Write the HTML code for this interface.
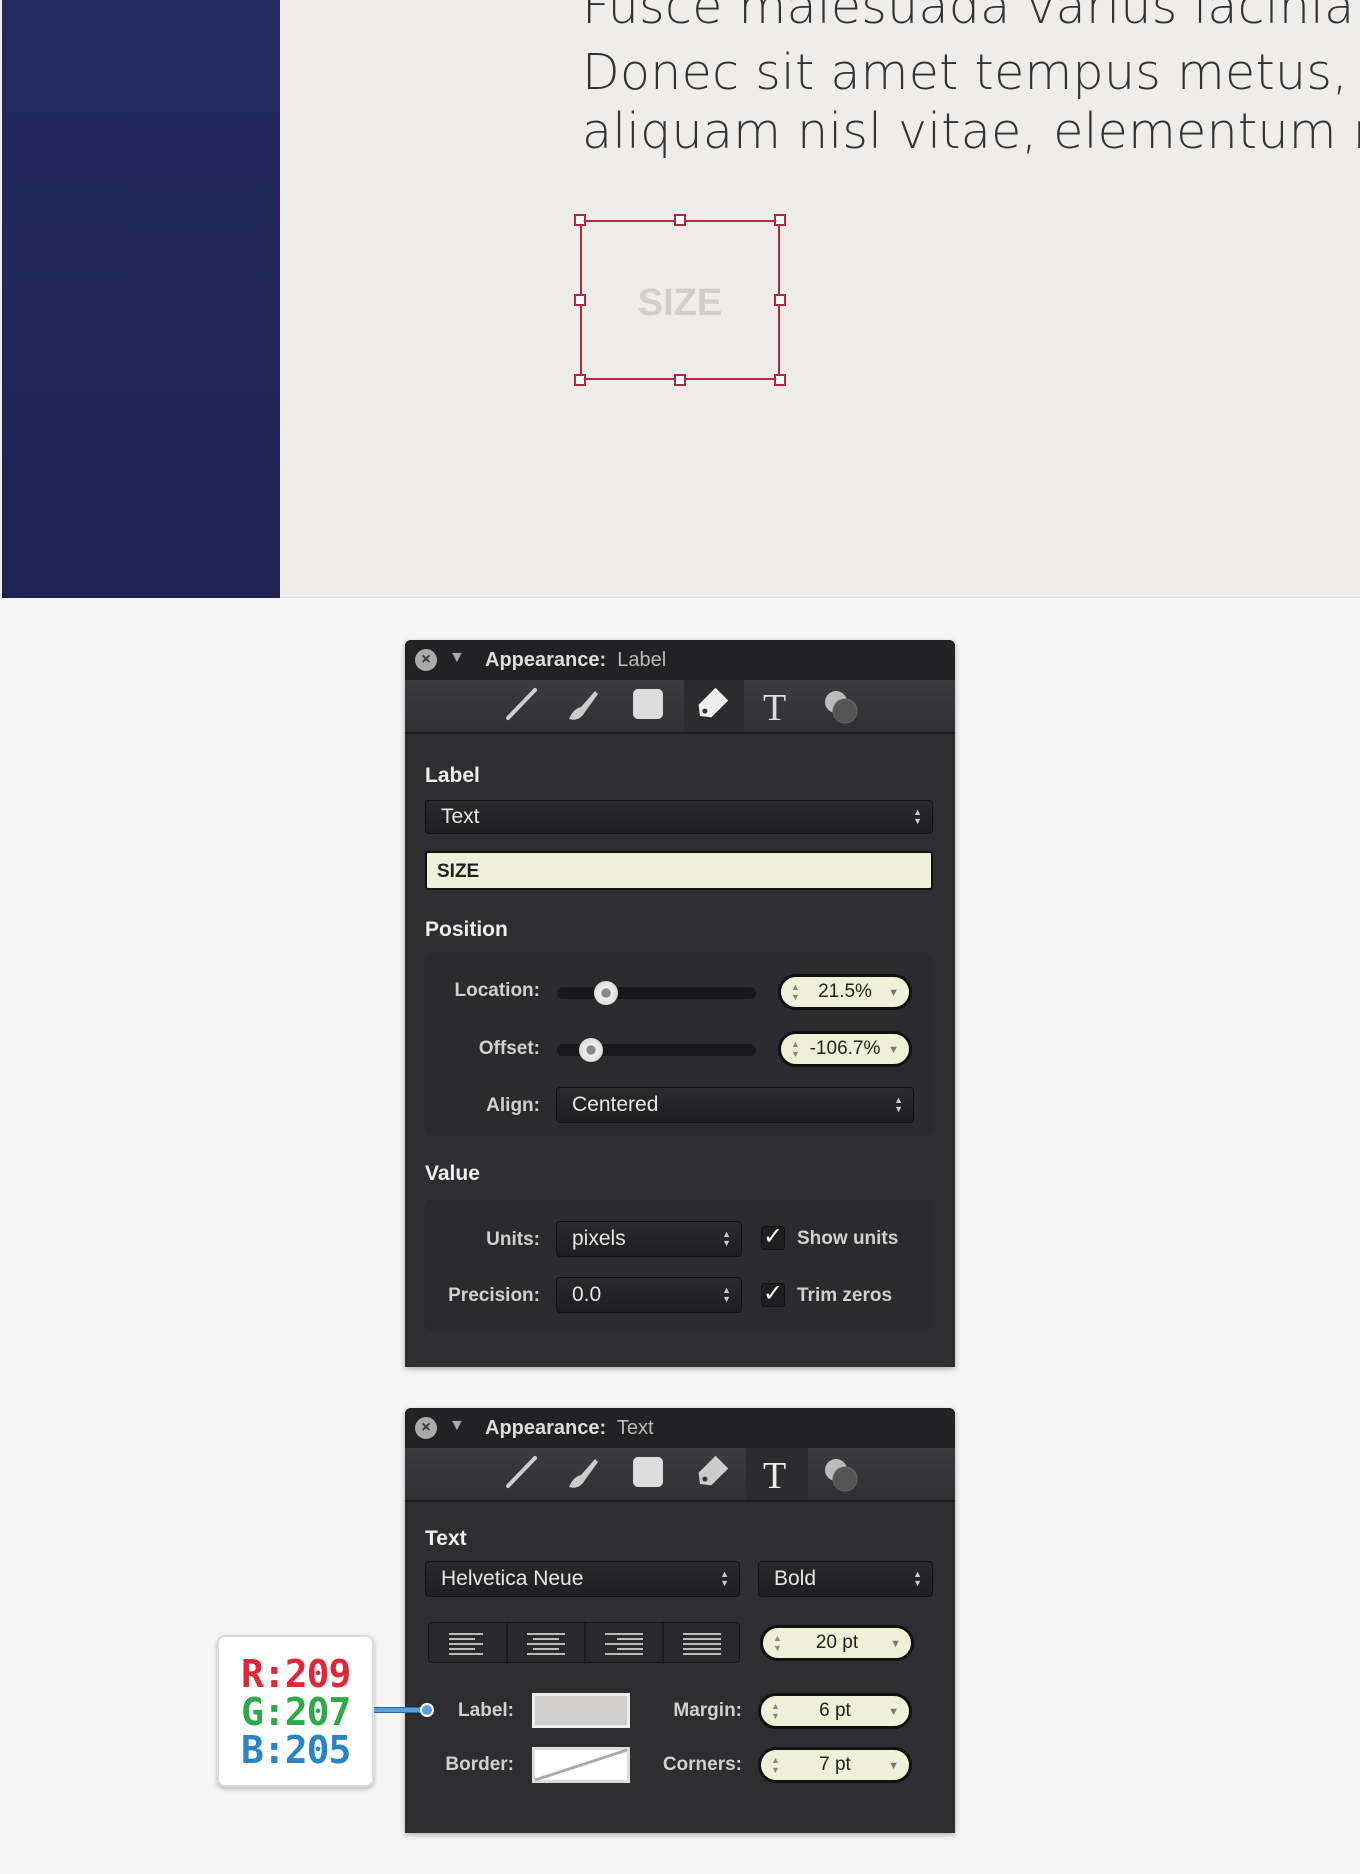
<!DOCTYPE html>
<html><head><meta charset="utf-8"><style>
*{box-sizing:border-box;margin:0;padding:0}
body{width:1360px;height:1874px;background:#f5f5f5;position:relative;overflow:hidden;font-family:"Liberation Sans",Arial,sans-serif}
.a{position:absolute}
.top{left:0;top:0;width:1360px;height:598px;background:#eeedeb;border-bottom:1px solid #ddd}
.side{left:2px;top:0;width:278px;height:598px;background:linear-gradient(#232a5e,#1e2353)}
.big{left:582px;font-size:49px;color:#333;letter-spacing:0.3px;white-space:nowrap;font-family:"DejaVu Sans","Liberation Sans",sans-serif;font-weight:200}
.sel{left:580px;top:220px;width:200px;height:160px;border:2px solid #b0283a}
.h{width:12px;height:12px;border:2px solid #b0283a;background:#fff}
.panel{left:405px;width:550px;background:#2e2e31;box-shadow:0 2px 6px rgba(0,0,0,.3)}
.hdr{left:0;top:0;width:550px;height:40px;background:#222224;border-radius:6px 6px 0 0;color:#ddd;font-size:20px}
.tb{left:0;top:40px;width:550px;height:54px;background:linear-gradient(#3c3c40,#303033);border-bottom:2px solid #1c1c1e}
.lbl{color:#d0d0d0;font-weight:bold;font-size:19px;text-align:right}
.hd{color:#eee;font-weight:bold;font-size:21px;left:20px}
.selb{background:linear-gradient(#2a2a2d,#1e1e20);border:1px solid #111;border-radius:4px;color:#e6e6e6;font-size:21px;padding-left:15px;display:flex;align-items:center}
.arr{position:absolute;right:10px;top:50%;transform:translateY(-50%);font-size:9px;line-height:9px;color:#ccc}
.pill{background:#eef0d8;border:3px solid #111;border-radius:18px;height:36px;color:#222;font-size:19px;display:flex;align-items:center;justify-content:center}
.pill .u{position:absolute;left:10px;top:5px;font-size:9px;line-height:10px;color:#888}
.pill .d{position:absolute;right:10px;top:10px;font-size:11px;color:#777}
.slider{height:12px;background:#18181a;border-radius:6px}
.knob{width:24px;height:24px;border-radius:50%;background:radial-gradient(#888 25%,#f0f0f0 30%,#ccc);top:-6px}
.grp{background:#2b2b2e;border:1px solid #29292b;border-radius:6px}
.chk{width:24px;height:24px;background:#1e1e20;border:1px solid #111;border-radius:3px;color:#fff;font-size:24px;line-height:20px;text-align:center}
</style></head><body>
<div class="a top"></div>
<div class="a side"></div>
<div class="a big" style="top:-22px">Fusce malesuada varius lacinia</div>
<div class="a big" style="top:44px">Donec sit amet tempus metus, a</div>
<div class="a big" style="top:103px">aliquam nisl vitae, elementum m</div>
<div class="a sel"></div>
<div class="a" style="left:580px;top:282px;width:200px;text-align:center;font-weight:bold;font-size:38px;color:#d1cfcd">SIZE</div>
<div class="a h" style="left:574px;top:214px"></div><div class="a h" style="left:674px;top:214px"></div><div class="a h" style="left:774px;top:214px"></div>
<div class="a h" style="left:574px;top:294px"></div><div class="a h" style="left:774px;top:294px"></div>
<div class="a h" style="left:574px;top:374px"></div><div class="a h" style="left:674px;top:374px"></div><div class="a h" style="left:774px;top:374px"></div>

<!-- panel 1 -->
<div class="a panel" style="top:640px;height:727px;border-radius:6px 6px 0 0">
 <div class="a hdr"><div class="a" style="left:10px;top:9px;width:22px;height:22px;border-radius:50%;background:#aaa;color:#333;font-size:16px;text-align:center;line-height:22px;font-weight:bold">×</div>
 <div class="a" style="left:44px;top:9px;color:#aaa;font-size:16px">▼</div>
 <div class="a" style="left:80px;top:9px"><b>Appearance:</b>&nbsp; <span style="color:#bbb">Label</span></div></div>
 <div class="a tb">
  <svg class="a" style="left:0;top:0" width="550" height="54">
   <rect x="279" y="0" width="60" height="52" fill="#2c2c2f"/>
   <line x1="103" y1="38" x2="130" y2="10" stroke="#ccc" stroke-width="4" stroke-linecap="round"/>
   <path d="M164 39 q4-10 12-12 l14-16 l3 3 l-13 18 q-6 10-16 7z" fill="#ccc"/>
   <rect x="228" y="9" width="30" height="30" rx="5" fill="#ddd"/>
   <g transform="rotate(-45 307 24)"><path d="M290 24 l7-9 h24 v18 h-24z" fill="#eee"/><circle cx="297" cy="24" r="2.5" fill="#333"/></g>
   <text x="358" y="40" font-family="Liberation Serif" font-size="38" fill="#ddd">T</text>
   <circle cx="431" cy="22" r="11" fill="#bbb"/><circle cx="440" cy="31" r="12" fill="#555" stroke="#666"/>
  </svg>
 </div>
 <div class="a hd" style="top:124px">Label</div>
 <div class="a selb" style="left:20px;top:160px;width:508px;height:34px">Text<div class="arr">▲<br>▼</div></div>
 <div class="a" style="left:20px;top:211px;width:508px;height:39px;background:#eef0d8;border:2px solid #111;border-radius:3px;font-weight:bold;font-size:19px;color:#222;padding:8px 10px">SIZE</div>
 <div class="a hd" style="top:278px">Position</div>
 <div class="a grp" style="left:20px;top:315px;width:508px;height:180px"></div>
 <div class="a lbl" style="left:20px;top:340px;width:115px">Location:</div>
 <div class="a slider" style="left:152px;top:347px;width:199px"><div class="a knob" style="left:37px"></div></div>
 <div class="a pill" style="left:373px;top:334px;width:134px"><span class="u">▲<br>▼</span>21.5%<span class="d">▼</span></div>
 <div class="a lbl" style="left:20px;top:398px;width:115px">Offset:</div>
 <div class="a slider" style="left:152px;top:404px;width:199px"><div class="a knob" style="left:22px"></div></div>
 <div class="a pill" style="left:373px;top:391px;width:134px"><span class="u">▲<br>▼</span>-106.7%<span class="d">▼</span></div>
 <div class="a lbl" style="left:20px;top:455px;width:115px">Align:</div>
 <div class="a selb" style="left:151px;top:447px;width:358px;height:36px">Centered<div class="arr">▲<br>▼</div></div>
 <div class="a hd" style="top:522px">Value</div>
 <div class="a grp" style="left:20px;top:560px;width:508px;height:130px"></div>
 <div class="a lbl" style="left:20px;top:589px;width:115px">Units:</div>
 <div class="a selb" style="left:151px;top:581px;width:186px;height:36px">pixels<div class="arr">▲<br>▼</div></div>
 <div class="a chk" style="left:356px;top:586px">✓</div>
 <div class="a lbl" style="left:392px;top:588px;text-align:left">Show units</div>
 <div class="a lbl" style="left:20px;top:645px;width:115px">Precision:</div>
 <div class="a selb" style="left:151px;top:637px;width:186px;height:36px">0.0<div class="arr">▲<br>▼</div></div>
 <div class="a chk" style="left:356px;top:643px">✓</div>
 <div class="a lbl" style="left:392px;top:645px;text-align:left">Trim zeros</div>
</div>

<!-- panel 2 -->
<div class="a panel" style="top:1408px;height:425px;border-radius:6px 6px 0 0">
 <div class="a hdr"><div class="a" style="left:10px;top:9px;width:22px;height:22px;border-radius:50%;background:#aaa;color:#333;font-size:16px;text-align:center;line-height:22px;font-weight:bold">×</div>
 <div class="a" style="left:44px;top:9px;color:#aaa;font-size:16px">▼</div>
 <div class="a" style="left:80px;top:9px"><b>Appearance:</b>&nbsp; <span style="color:#bbb">Text</span></div></div>
 <div class="a tb">
  <svg class="a" style="left:0;top:0" width="550" height="54">
   <rect x="341" y="0" width="62" height="52" fill="#2c2c2f"/>
   <line x1="103" y1="38" x2="130" y2="10" stroke="#ccc" stroke-width="4" stroke-linecap="round"/>
   <path d="M164 39 q4-10 12-12 l14-16 l3 3 l-13 18 q-6 10-16 7z" fill="#ccc"/>
   <rect x="228" y="9" width="30" height="30" rx="5" fill="#ddd"/>
   <g transform="rotate(-45 307 24)"><path d="M290 24 l7-9 h24 v18 h-24z" fill="#ccc"/><circle cx="297" cy="24" r="2.5" fill="#333"/></g>
   <text x="358" y="40" font-family="Liberation Serif" font-size="38" fill="#eee">T</text>
   <circle cx="431" cy="22" r="11" fill="#bbb"/><circle cx="440" cy="31" r="12" fill="#555" stroke="#666"/>
  </svg>
 </div>
 <div class="a hd" style="top:119px">Text</div>
 <div class="a selb" style="left:20px;top:153px;width:315px;height:36px">Helvetica Neue<div class="arr">▲<br>▼</div></div>
 <div class="a selb" style="left:353px;top:153px;width:175px;height:36px">Bold<div class="arr">▲<br>▼</div></div>
 <div class="a" style="left:23px;top:214px;width:312px;height:41px;background:#29292c;border:1px solid #151517;border-radius:4px;display:flex">
  <svg width="312" height="41"><g stroke="#bbb" stroke-width="2">
   <line x1="78" y1="0" x2="78" y2="41" stroke="#1a1a1c"/><line x1="156" y1="0" x2="156" y2="41" stroke="#1a1a1c"/><line x1="234" y1="0" x2="234" y2="41" stroke="#1a1a1c"/>
   <path d="M20 11h34M20 16h26M20 21h34M20 26h26M20 31h34"/>
   <path d="M98 11h38M104 16h26M98 21h38M104 26h26M98 31h38"/>
   <path d="M176 11h38M188 16h26M176 21h38M188 26h26M176 31h38"/>
   <path d="M254 11h38M254 16h38M254 21h38M254 26h38M254 31h38"/>
  </g></svg>
 </div>
 <div class="a pill" style="left:355px;top:217px;width:154px"><span class="u">▲<br>▼</span>20 pt<span class="d">▼</span></div>
 <div class="a lbl" style="left:20px;top:292px;width:89px">Label:</div>
 <div class="a" style="left:127px;top:285px;width:98px;height:35px;background:#d1cfcd;border:3px solid #eee"></div>
 <div class="a lbl" style="left:220px;top:292px;width:117px">Margin:</div>
 <div class="a pill" style="left:353px;top:285px;width:154px"><span class="u">▲<br>▼</span>6 pt<span class="d">▼</span></div>
 <div class="a lbl" style="left:20px;top:346px;width:89px">Border:</div>
 <svg class="a" style="left:127px;top:339px" width="98" height="36"><rect x="1.5" y="1.5" width="95" height="33" fill="#fff" stroke="#ddd" stroke-width="3"/><line x1="3" y1="33" x2="95" y2="3" stroke="#aaa" stroke-width="3"/></svg>
 <div class="a lbl" style="left:220px;top:346px;width:117px">Corners:</div>
 <div class="a pill" style="left:353px;top:339px;width:154px"><span class="u">▲<br>▼</span>7 pt<span class="d">▼</span></div>
</div>

<!-- RGB callout -->
<div class="a" style="left:217px;top:1635px;width:157px;height:152px;background:#fff;border:2px solid #ddd;border-radius:8px;box-shadow:0 2px 5px rgba(0,0,0,.25);font-family:'DejaVu Sans Mono','Liberation Mono',monospace;font-weight:bold;font-size:38px;line-height:38px;padding:18px 0 0 22px;letter-spacing:-1px">
 <div style="color:#e0283a">R:209</div><div style="color:#2eaa4a">G:207</div><div style="color:#2a85c8">B:205</div>
</div>
<div class="a" style="left:374px;top:1707px;width:52px;height:6px;background:#5aa0dc;border-top:1px solid #2a6aa8;border-bottom:1px solid #2a6aa8"></div>
<div class="a" style="left:420px;top:1703px;width:14px;height:14px;border-radius:50%;background:#5aa0dc;border:2px solid #fff"></div>
</body></html>
